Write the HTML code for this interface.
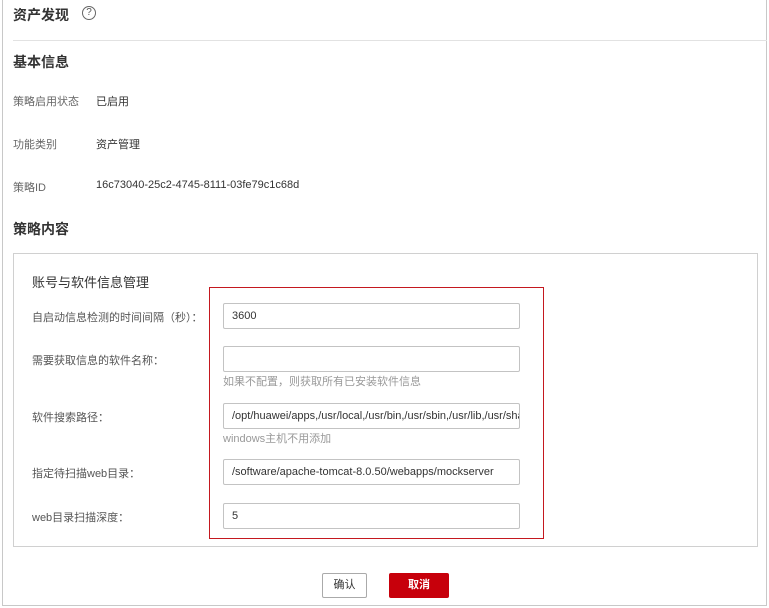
<!DOCTYPE html><html><head><meta charset="utf-8"><style>
*{margin:0;padding:0;box-sizing:border-box}
body{width:769px;height:608px;background:#fff;font-family:"Liberation Sans","Noto Sans CJK SC",sans-serif;color:#333;font-size:11px;position:relative;overflow:hidden}
.a{position:absolute;white-space:nowrap}
.outer{position:absolute;left:2px;top:-2px;width:765px;height:608px;border:1px solid #c8c8c8}
.inp{position:absolute;left:223px;width:297px;height:26px;border:1px solid #c3c3c3;border-radius:2px;padding-left:8px;line-height:24px;font-size:11px;color:#333;overflow:hidden;white-space:nowrap}
.lab{position:absolute;left:32px;color:#555;font-size:11px}
.hint{position:absolute;left:223px;color:#999;font-size:11px}
</style></head><body>
<div class="outer"></div>
<div class="a" style="left:13px;top:5px;font-size:14px;font-weight:bold;color:#333">资产发现</div>
<div class="a" style="left:82px;top:6px;width:14px;height:14px;border:1px solid #666;border-radius:50%;font-size:10px;line-height:12px;text-align:center;color:#555">?</div>
<div class="a" style="left:13px;top:40px;width:754px;height:1px;background:#e2e2e2"></div>
<div class="a" style="left:13px;top:52px;font-size:14px;font-weight:bold">基本信息</div>
<div class="a" style="left:13px;top:93px;color:#666">策略启用状态</div><div class="a" style="left:96px;top:93px">已启用</div>
<div class="a" style="left:13px;top:136px;color:#666">功能类别</div><div class="a" style="left:96px;top:136px">资产管理</div>
<div class="a" style="left:13px;top:179px;color:#666">策略ID</div><div class="a" style="left:96px;top:179px">16c73040-25c2-4745-8111-03fe79c1c68d</div>
<div class="a" style="left:13px;top:219px;font-size:14px;font-weight:bold">策略内容</div>
<div class="a" style="left:13px;top:253px;width:745px;height:294px;border:1px solid #d0d0d0"></div>
<div class="a" style="left:32px;top:272px;font-size:13px;color:#333">账号与软件信息管理</div>
<div class="a" style="left:209px;top:287px;width:335px;height:252px;border:1px solid #c4181f"></div>
<div class="lab" style="top:309px">自启动信息检测的时间间隔（秒）：</div>
<div class="inp" style="top:303px">3600</div>
<div class="lab" style="top:352px">需要获取信息的软件名称：</div>
<div class="inp" style="top:346px"></div>
<div class="hint" style="top:373px">如果不配置，则获取所有已安装软件信息</div>
<div class="lab" style="top:409px">软件搜索路径：</div>
<div class="inp" style="top:403px">/opt/huawei/apps,/usr/local,/usr/bin,/usr/sbin,/usr/lib,/usr/share</div>
<div class="hint" style="top:430px">windows主机不用添加</div>
<div class="lab" style="top:465px">指定待扫描web目录：</div>
<div class="inp" style="top:459px">/software/apache-tomcat-8.0.50/webapps/mockserver</div>
<div class="lab" style="top:509px">web目录扫描深度：</div>
<div class="inp" style="top:503px">5</div>
<div class="a" style="left:322px;top:573px;width:45px;height:25px;border:1px solid #aaa;border-radius:2px;text-align:center;line-height:23px;color:#333">确认</div>
<div class="a" style="left:389px;top:573px;width:60px;height:25px;background:#c7000b;border-radius:2px;text-align:center;line-height:25px;color:#fff;font-weight:bold">取消</div>
</body></html>
